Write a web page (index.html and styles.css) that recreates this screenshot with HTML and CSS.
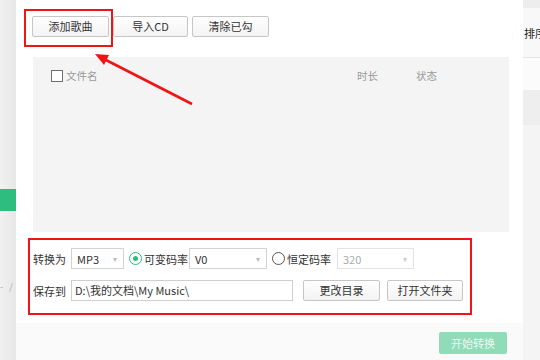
FILE: index.html
```html
<!DOCTYPE html>
<html lang="zh-CN">
<head>
<meta charset="utf-8">
<title>添加歌曲</title>
<link rel="stylesheet" href="styles.css">
</head>
<body>
<div class="screen">
  <aside class="side-left">
    <div class="side-green"></div>
    <div class="side-marks">-&nbsp;&nbsp;&nbsp;/</div>
  </aside>
  <main class="panel">
    <div class="toolbar">
      <button class="btn">添加歌曲</button>
      <button class="btn">导入CD</button>
      <button class="btn">清除已勾</button>
    </div>
    <section class="list">
      <div class="list-head">
        <span class="chk"></span>
        <span class="col-name">文件名</span>
        <span class="col-dur">时长</span>
        <span class="col-status">状态</span>
      </div>
    </section>
    <section class="settings">
      <div class="row">
        <span class="label">转换为</span>
        <div class="select sel-fmt"><span>MP3</span><span class="caret">▾</span></div>
        <span class="radio on"></span>
        <span class="radio-text">可变码率</span>
        <div class="select sel-vbr"><span>V0</span><span class="caret">▾</span></div>
        <span class="radio"></span>
        <span class="radio-text">恒定码率</span>
        <div class="select sel-cbr disabled"><span>320</span><span class="caret">▾</span></div>
      </div>
      <div class="row">
        <span class="label">保存到</span>
        <div class="path">D:\我的文档\My Music\</div>
        <button class="btn btn-change">更改目录</button>
        <button class="btn btn-open">打开文件夹</button>
      </div>
    </section>
    <footer class="foot">
      <button class="btn-start">开始转换</button>
    </footer>
  </main>
  <aside class="side-right">
    <div class="sr-top"></div>
    <div class="sr-sort">排序</div>
    <div class="sr-a"></div>
    <div class="sr-b"></div>
    <div class="sr-c"></div>
  </aside>
  <div class="mark-box"></div>
  <svg class="arrow" width="540" height="360" viewBox="0 0 540 360">
    <line x1="192" y1="104" x2="104" y2="59" stroke="#f01515" stroke-width="2.6"/>
    <polygon points="95,54 109,55 104,65" fill="#f01515"/>
  </svg>
</div>
</body>
</html>
```
FILE: styles.css
```css
* { box-sizing: border-box; }
html, body { margin: 0; padding: 0; background: #fff; }
body { font-family: "Noto Sans CJK SC", "Noto Sans", sans-serif; color: #333; }

.screen {
  position: relative;
  width: 540px;
  height: 360px;
  overflow: hidden;
  display: flex;
}

.side-left {
  width: 16px;
  flex: none;
  background: linear-gradient(to right, #f1f1f1, #e7e7e7);
  display: flex;
  flex-direction: column;
}
.side-green {
  margin-top: 189px;
  height: 22px;
  background: #2ebd7f;
}
.side-marks {
  margin-top: 70px;
  font-size: 9px;
  line-height: 12px;
  color: #aaa;
  white-space: nowrap;
}

.panel {
  width: 507px;
  flex: none;
  display: flex;
  flex-direction: column;
  background: #fff;
}

.toolbar {
  display: flex;
  gap: 4px;
  padding: 16px 0 0 16px;
}
.btn {
  width: 77px;
  height: 21px;
  padding: 0;
  border: 1px solid #c6c6c6;
  border-radius: 2px;
  background: linear-gradient(#ffffff, #f3f3f3);
  font-family: inherit;
  font-size: 11px;
  line-height: 19px;
  color: #333;
}
.toolbar .btn:nth-child(2) { width: 75px; }

.list {
  margin: 20px 0 0 17px;
  width: 476px;
  height: 175px;
  background: #f4f4f4;
}
.list-head {
  display: flex;
  align-items: center;
  padding: 13px 0 0 18px;
  font-size: 10.5px;
  color: #999;
  line-height: 12px;
}
.chk {
  width: 12px;
  height: 12px;
  border: 1.5px solid #6f6f6f;
  background: #fff;
}
.col-name { margin-left: 3px; width: 291px; }
.col-dur { width: 59px; }

.settings {
  margin: 6px 0 0 12px;
  width: 444px;
  border: 2px solid #f01515;
  padding: 8px 0 12px 3px;
  display: flex;
  flex-direction: column;
  gap: 11px;
}
.row {
  display: flex;
  align-items: center;
  height: 21px;
  font-size: 11px;
}
.label { width: 38px; color: #333; }
.select {
  height: 21px;
  border: 1px solid #d2d2d2;
  background: #fff;
  display: flex;
  align-items: center;
  justify-content: space-between;
  padding: 0 6px 0 5px;
  font-size: 11px;
  color: #333;
}
.caret { font-size: 8px; color: #bbb; }
.sel-fmt { width: 53px; }
.sel-vbr { width: 78px; margin-left: 1px; }
.sel-cbr { width: 77px; margin-left: 6px; }
.select.disabled { color: #aaa; border-color: #e2e2e2; }
.select.disabled .caret { color: #ccc; }

.radio {
  width: 13px;
  height: 13px;
  border-radius: 50%;
  border: 1.3px solid #555;
  margin-left: 5px;
  display: flex;
  align-items: center;
  justify-content: center;
  background: #fff;
}
.radio.on { border-color: #2ebd7f; }
.radio.on::after {
  content: "";
  width: 5px;
  height: 5px;
  border-radius: 50%;
  background: #2ebd7f;
}
.radio-text { margin-left: 2px; color: #333; }

.path {
  width: 222px;
  height: 21px;
  border: 1px solid #cfcfcf;
  padding-left: 3px;
  line-height: 19px;
  color: #333;
}
.btn-change { margin-left: 10px; }
.btn-open { margin-left: 7px; width: 76px; }

.foot {
  margin-top: 8px;
  flex: 1;
  background: #fafafa;
  display: flex;
  justify-content: flex-end;
  padding: 9px 16px 0 0;
}
.btn-start {
  width: 68px;
  height: 22px;
  border: none;
  border-radius: 2px;
  background: #90dcb9;
  color: #eaf8f1;
  font-family: inherit;
  font-size: 11px;
  padding: 0;
}

.side-right {
  width: 17px;
  flex: none;
  display: flex;
  flex-direction: column;
  overflow: hidden;
}
.sr-top { height: 8px; background: #ededed; }
.sr-sort {
  height: 50px;
  background: #f8f8f8;
  border-bottom: 1px solid #e6e6e6;
  font-size: 11px;
  line-height: 50px;
  padding-left: 1px;
  color: #222;
  white-space: nowrap;
}
.sr-a { height: 32px; background: #fbfbfb; }
.sr-b { height: 35px; background: #eeeeee; }
.sr-c { flex: 1; background: #f4f4f4; }

.mark-box {
  position: absolute;
  left: 24px;
  top: 9px;
  width: 89px;
  height: 38px;
  border: 2px solid #f01515;
}
.arrow {
  position: absolute;
  left: 0;
  top: 0;
  pointer-events: none;
}
```
